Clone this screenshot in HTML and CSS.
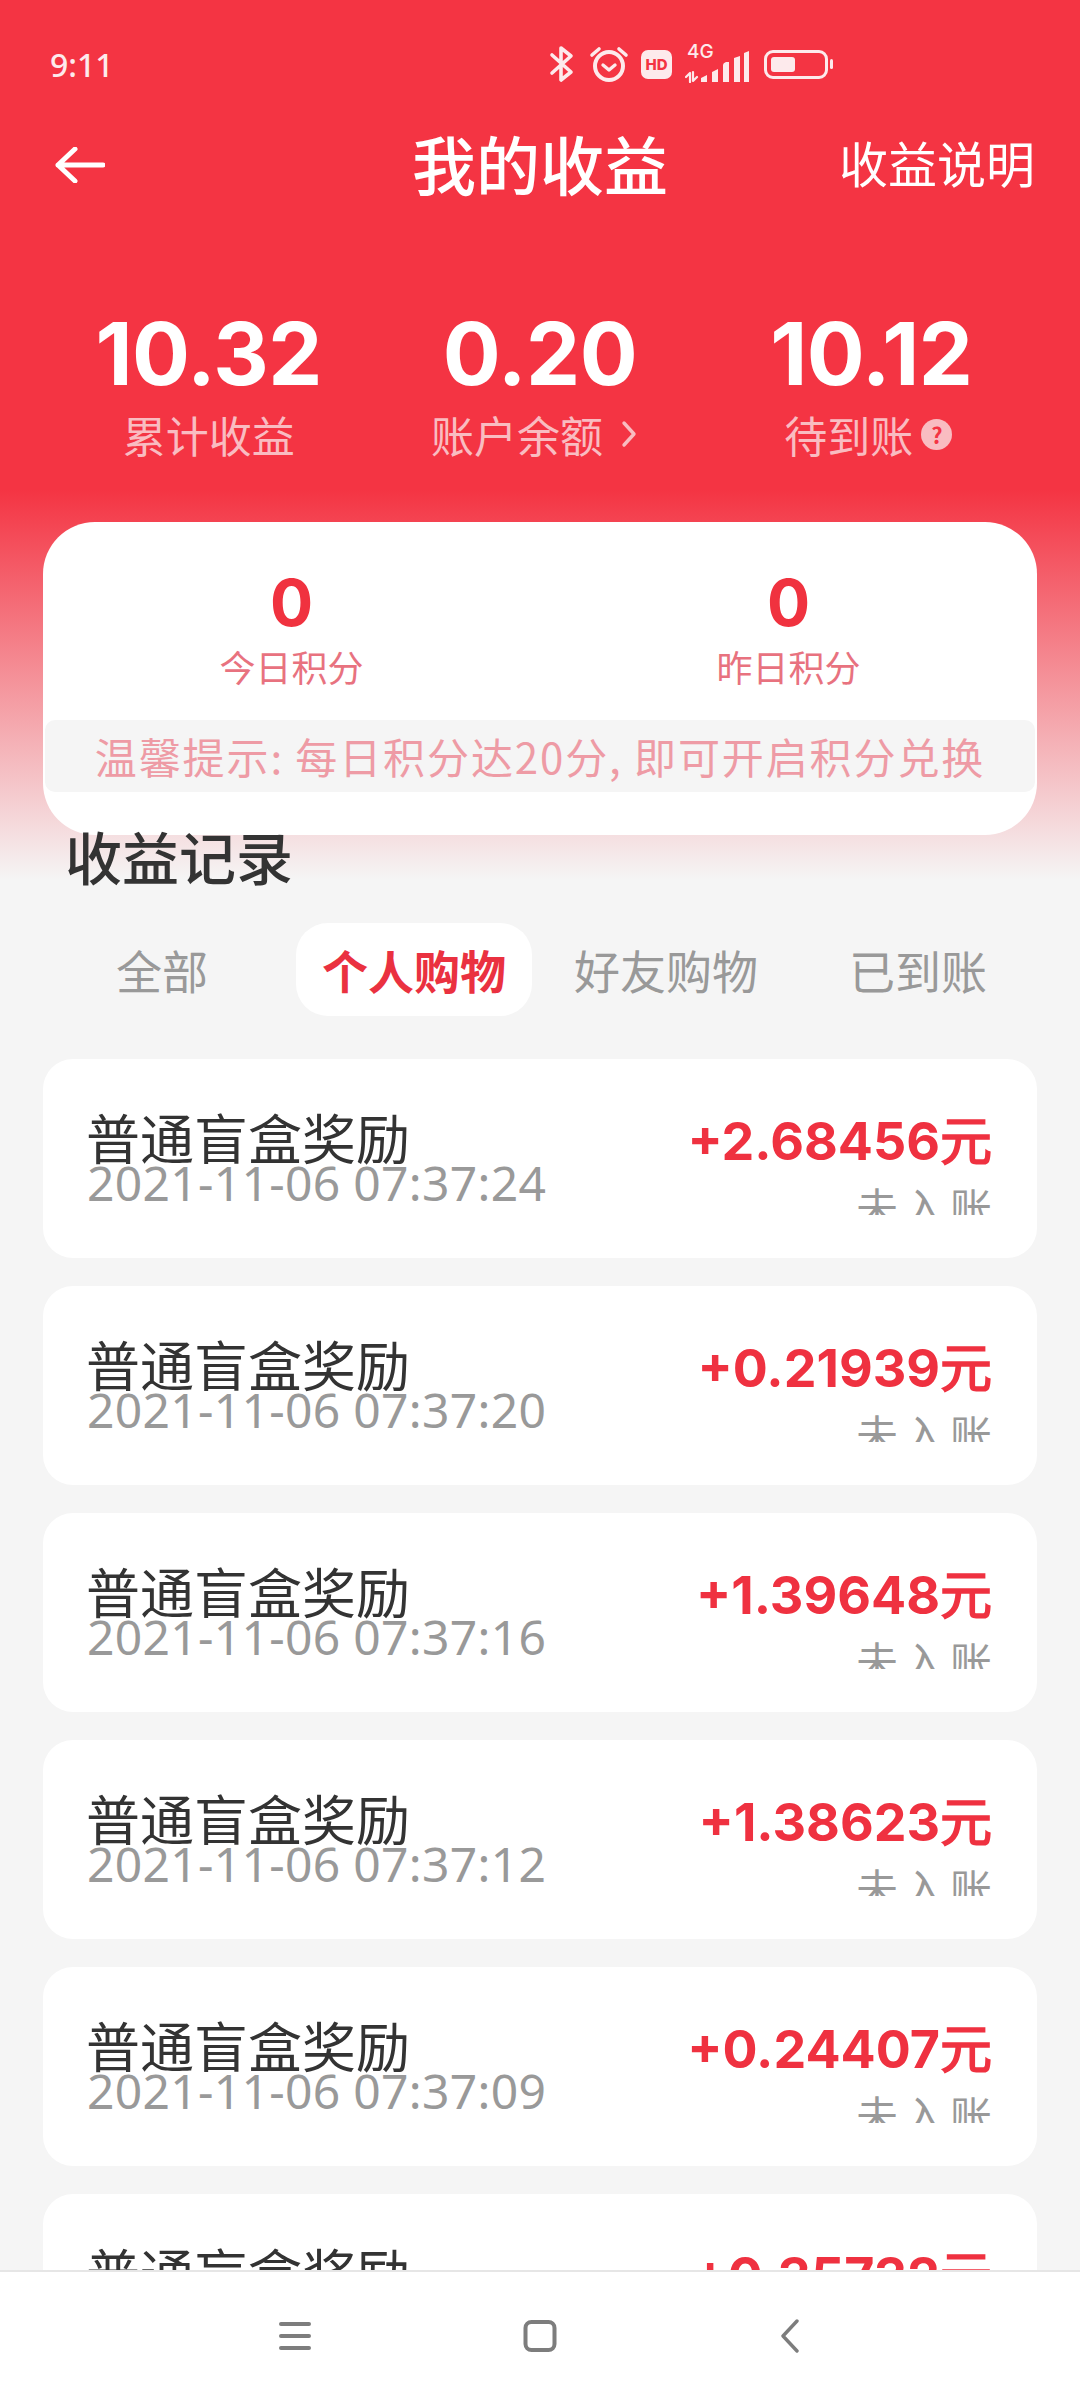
FILE: index.html
```html
<!DOCTYPE html>
<html lang="zh-CN">
<head>
<meta charset="UTF-8">
<meta name="viewport" content="width=device-width, initial-scale=1.0">
<title>我的收益</title>
<link rel="stylesheet" href="styles.css">
</head>
<body>
<div class="page">

  <div class="statusbar">
    <span class="clock">9:11</span>
    <div class="status-icons">
      <svg class="ic-bt" width="26" height="38" viewBox="0 0 26 38"><path d="M3 10 L22 27 L12 35 V3 L22 11 L3 28" fill="none" stroke="#fdeaec" stroke-width="3.6" stroke-linecap="round" stroke-linejoin="round"/></svg>
      <svg class="ic-alarm" width="40" height="38" viewBox="0 0 40 38"><circle cx="20" cy="21" r="14" fill="none" stroke="#fdeaec" stroke-width="4"/><path d="M3 10 L10 4 M37 10 L30 4" stroke="#fdeaec" stroke-width="3.6" stroke-linecap="round"/><path d="M14 20 L20 25 L26 20" fill="none" stroke="#fdeaec" stroke-width="3.4" stroke-linecap="round" stroke-linejoin="round"/></svg>
      <span class="hd">HD</span>
      <div class="signal">
        <span class="net">4G</span>
        <svg width="64" height="32" viewBox="0 0 64 32"><path d="M1 26 L5 22 V31 M8 21 V30 L12 26" fill="none" stroke="#fdeaec" stroke-width="2.2" stroke-linecap="round" stroke-linejoin="round"/><path d="M16 31 V27 L22 24 V31 Z M27 31 V21 L33 18 V31 Z M38 31 V14 Q38 12 41 11 L44 11 V31 Z M49 31 V7 L55 5 V31 Z M59 31 V2 L64 0 V31 Z" fill="#fdeaec"/></svg>
      </div>
      <div class="battery"><span class="battery-fill"></span></div>
      <span class="battery-nub"></span>
    </div>
  </div>

  <div class="navbar">
    <svg class="back" width="50" height="36" viewBox="0 0 50 36"><path d="M20 2 L3 18 L20 34 M3 18 H48" fill="none" stroke="#fff" stroke-width="5" stroke-linecap="round" stroke-linejoin="round"/></svg>
    <h1 class="nav-title">我的收益</h1>
    <span class="nav-link">收益说明</span>
  </div>

  <div class="stats">
    <div class="stat">
      <div class="stat-num">10.32</div>
      <div class="stat-label">累计收益</div>
    </div>
    <div class="stat">
      <div class="stat-num">0.20</div>
      <div class="stat-label">账户余额
        <svg class="chevron" width="16" height="28" viewBox="0 0 16 28"><path d="M3 3 L13 14 L3 25" fill="none" stroke="#f9bcc1" stroke-width="3.4" stroke-linecap="round" stroke-linejoin="round"/></svg>
      </div>
    </div>
    <div class="stat">
      <div class="stat-num">10.12</div>
      <div class="stat-label">待到账<span class="help">?</span></div>
    </div>
  </div>

  <div class="points">
    <div class="points-row">
      <div class="point">
        <div class="point-num">0</div>
        <div class="point-label">今日积分</div>
      </div>
      <div class="point">
        <div class="point-num">0</div>
        <div class="point-label">昨日积分</div>
      </div>
    </div>
    <div class="tip">温馨提示: 每日积分达20分, 即可开启积分兑换</div>
  </div>

  <h2 class="section-title">收益记录</h2>

  <div class="tabs">
    <span class="tab">全部</span>
    <span class="tab active">个人购物</span>
    <span class="tab">好友购物</span>
    <span class="tab">已到账</span>
  </div>

  <div class="records">
    <div class="record">
      <div class="record-left">
        <div class="record-name">普通盲盒奖励</div>
        <div class="record-date">2021-11-06 07:37:24</div>
      </div>
      <div class="record-right">
        <div class="record-amount">+2.68456元</div>
        <div class="record-state">未入账</div>
      </div>
    </div>
    <div class="record">
      <div class="record-left">
        <div class="record-name">普通盲盒奖励</div>
        <div class="record-date">2021-11-06 07:37:20</div>
      </div>
      <div class="record-right">
        <div class="record-amount">+0.21939元</div>
        <div class="record-state">未入账</div>
      </div>
    </div>
    <div class="record">
      <div class="record-left">
        <div class="record-name">普通盲盒奖励</div>
        <div class="record-date">2021-11-06 07:37:16</div>
      </div>
      <div class="record-right">
        <div class="record-amount">+1.39648元</div>
        <div class="record-state">未入账</div>
      </div>
    </div>
    <div class="record">
      <div class="record-left">
        <div class="record-name">普通盲盒奖励</div>
        <div class="record-date">2021-11-06 07:37:12</div>
      </div>
      <div class="record-right">
        <div class="record-amount">+1.38623元</div>
        <div class="record-state">未入账</div>
      </div>
    </div>
    <div class="record">
      <div class="record-left">
        <div class="record-name">普通盲盒奖励</div>
        <div class="record-date">2021-11-06 07:37:09</div>
      </div>
      <div class="record-right">
        <div class="record-amount">+0.24407元</div>
        <div class="record-state">未入账</div>
      </div>
    </div>
    <div class="record">
      <div class="record-left">
        <div class="record-name">普通盲盒奖励</div>
      </div>
      <div class="record-right">
        <div class="record-amount">+0.35732元</div>
      </div>
    </div>
  </div>

  <div class="sysnav">
    <svg width="32" height="30" viewBox="0 0 32 30"><path d="M2 3 H30 M2 15 H30 M2 27 H30" stroke="#7d7d7d" stroke-width="4" stroke-linecap="round"/></svg>
    <svg class="sys-home" width="34" height="34" viewBox="0 0 34 34"><rect x="2.5" y="3" width="29" height="28" rx="6" fill="none" stroke="#7d7d7d" stroke-width="4"/></svg>
    <svg class="sys-back" width="20" height="34" viewBox="0 0 20 34"><path d="M17 2 L3 17 L17 32" fill="none" stroke="#7d7d7d" stroke-width="3.4" stroke-linecap="round" stroke-linejoin="round"/></svg>
  </div>

</div>
</body>
</html>
```

FILE: styles.css
```css
* {
  box-sizing: border-box;
}

body {
  margin: 0;
  font-family: "Noto Sans CJK SC", sans-serif;
}

.page {
  position: relative;
  width: 1080px;
  height: 2400px;
  overflow: hidden;
  background: linear-gradient(#f43443 0, #f43443 490px, #f5f5f5 880px);
}

/* status bar */
.statusbar {
  display: flex;
  align-items: center;
  justify-content: space-between;
  height: 64px;
  margin-top: 32px;
  padding: 0 247px 0 50px;
}

.clock {
  font-family: "Noto Sans", sans-serif;
  font-size: 32px;
  font-weight: 500;
  color: #fdeaec;
}

.status-icons {
  display: flex;
  align-items: center;
  height: 40px;
}

.ic-alarm {
  margin-left: 14px;
}

.hd {
  width: 31px;
  height: 29px;
  margin-left: 12px;
  border-radius: 7px;
  background: #fdeaec;
  color: #f43443;
  font-family: "Inter", sans-serif;
  font-size: 15px;
  font-weight: 800;
  line-height: 29px;
  text-align: center;
}

.signal {
  position: relative;
  width: 64px;
  height: 32px;
  margin: 6px 0 0 13px;
}

.net {
  position: absolute;
  left: 2px;
  top: -9px;
  font-family: "Inter", sans-serif;
  font-size: 19px;
  font-weight: 500;
  line-height: 20px;
  color: #fdeaec;
}

.battery {
  width: 64px;
  height: 29px;
  margin-left: 15px;
  padding: 4px;
  border: 3px solid #fdeaec;
  border-radius: 9px;
}

.battery-fill {
  display: block;
  width: 24px;
  height: 100%;
  border-radius: 3px;
  background: #fdeaec;
}

.battery-nub {
  width: 3px;
  height: 10px;
  margin-left: 2px;
  border-radius: 2px;
  background: #fdeaec;
}

/* title row */
.navbar {
  position: relative;
  display: flex;
  align-items: center;
  justify-content: space-between;
  height: 76px;
  margin-top: 28px;
  padding: 0 45px 0 55px;
  color: #fff;
}

.back {
  margin-top: 6px;
}

.nav-title {
  position: absolute;
  left: 412px;
  margin: 0;
  font-size: 64px;
  font-weight: 500;
  line-height: 76px;
}

.nav-link {
  font-size: 49px;
  line-height: 76px;
}

/* totals */
.stats {
  display: grid;
  grid-template-columns: repeat(3, 1fr);
  margin: 0 43px;
  padding-top: 112px;
  text-align: center;
}

.stat-num {
  height: 84px;
  font-family: "Inter", sans-serif;
  font-size: 86px;
  font-weight: 700;
  line-height: 84px;
  letter-spacing: -0.5px;
  color: #fff;
}

.stat-label {
  display: flex;
  align-items: center;
  justify-content: center;
  height: 56px;
  margin-top: 10px;
  font-size: 43px;
  line-height: 56px;
  color: #f9bcc1;
}

.chevron {
  margin: 0 12px 0 18px;
}

.help {
  width: 31px;
  height: 31px;
  margin: 0 6px 0 8px;
  border-radius: 50%;
  background: #f9bcc1;
  color: #f43443;
  font-size: 22px;
  font-weight: 700;
  line-height: 31px;
}

/* points card */
.points {
  height: 313px;
  margin: 60px 43px 0;
  border-radius: 52px;
  background: #fff;
}

.points-row {
  display: grid;
  grid-template-columns: 1fr 1fr;
  height: 198px;
  padding-top: 46px;
  text-align: center;
}

.point-num {
  height: 70px;
  font-family: "Inter", sans-serif;
  font-size: 64px;
  font-weight: 700;
  line-height: 70px;
  color: #f0323f;
}

.point-label {
  margin-top: 4px;
  font-size: 36px;
  line-height: 48px;
  color: #e8727f;
}

.tip {
  height: 72px;
  margin: 0 2px;
  border-radius: 10px;
  background: #f5f5f5;
  font-size: 42px;
  line-height: 72px;
  letter-spacing: 1.9px;
  text-align: center;
  white-space: nowrap;
  color: #ee9ba5;
}

/* tabs */
.section-title {
  margin: -12px 0 0 65px;
  font-size: 57px;
  font-weight: 500;
  line-height: 64px;
  color: #333;
}

.tabs {
  display: grid;
  grid-template-columns: repeat(4, 1fr);
  height: 93px;
  margin: 36px 36px 0;
}

.tab {
  margin: 0 8px;
  border-radius: 32px;
  font-size: 46px;
  line-height: 93px;
  text-align: center;
  color: #999;
}

.tab.active {
  background: #fff;
  font-weight: 700;
  color: #ea3140;
}

/* records */
.records {
  display: flex;
  flex-direction: column;
  gap: 28px;
  margin: 43px 43px 0;
}

.record {
  display: flex;
  justify-content: space-between;
  flex: none;
  height: 199px;
  padding: 48px 45px 0 44px;
  border-radius: 30px;
  background: #fff;
}

.record-name {
  height: 54px;
  margin-left: -1px;
  font-size: 54px;
  line-height: 60px;
  color: #333;
}

.record-date {
  font-family: "Noto Sans", sans-serif;
  font-size: 48px;
  line-height: 44px;
  letter-spacing: 0.3px;
  color: #999;
}

.record-right {
  text-align: right;
}

.record-amount {
  height: 60px;
  margin-top: 5px;
  font-family: "Inter", sans-serif;
  font-size: 52px;
  font-weight: 700;
  line-height: 60px;
  color: #ef3140;
}

.record-state {
  height: 35px;
  margin-top: 8px;
  margin-right: -5px;
  overflow: hidden;
  font-size: 42px;
  line-height: 52px;
  letter-spacing: 5px;
  color: #999;
}

/* android nav */
.sysnav {
  position: absolute;
  left: 0;
  right: 0;
  bottom: 0;
  display: flex;
  align-items: center;
  height: 130px;
  padding-left: 279px;
  background: #fff;
  border-top: 2px solid #e6e6e6;
}

.sys-home {
  margin-left: 212px;
}

.sys-back {
  margin-left: 223px;
}
```
